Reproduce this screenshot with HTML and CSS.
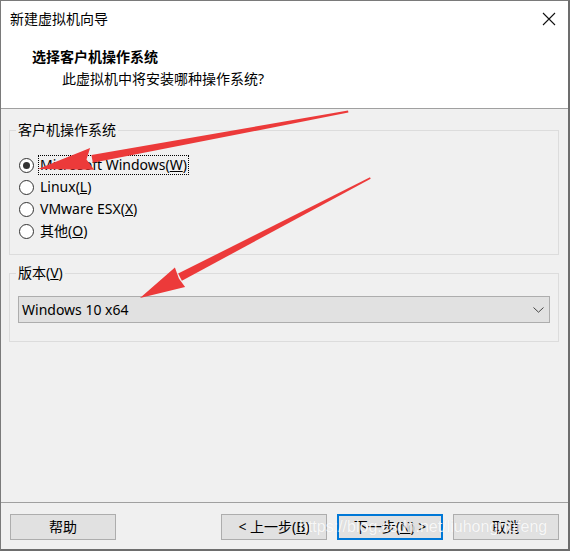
FILE: index.html
```html
<!DOCTYPE html>
<html lang="zh-CN">
<head>
<meta charset="utf-8">
<title>新建虚拟机向导</title>
<link rel="stylesheet" href="styles.css">
</head>
<body>
<div class="window">
  <div class="titlebar">
    <span class="title">新建虚拟机向导</span>
    <svg class="close" width="14" height="14" viewBox="0 0 14 14"><path d="M1 1 L13 13 M13 1 L1 13" stroke="#111" stroke-width="1.1" fill="none"/></svg>
  </div>
  <div class="header">
    <div class="h-title">选择客户机操作系统</div>
    <div class="h-sub">此虚拟机中将安装哪种操作系统?</div>
  </div>
  <div class="sep"></div>
  <div class="body">
    <fieldset class="group group-os">
      <legend>客户机操作系统</legend>
      <div class="radio-row"><span class="radio checked"></span><span class="rlabel focus">Microsoft Windows(<u>W</u>)</span></div>
      <div class="radio-row"><span class="radio"></span><span class="rlabel">Linux(<u>L</u>)</span></div>
      <div class="radio-row"><span class="radio"></span><span class="rlabel">VMware ESX(<u>X</u>)</span></div>
      <div class="radio-row"><span class="radio"></span><span class="rlabel">其他(<u>O</u>)</span></div>
    </fieldset>
    <fieldset class="group group-ver">
      <legend>版本(<u>V</u>)</legend>
      <div class="select">
        <span>Windows 10 x64</span>
        <svg class="chev" width="11" height="6" viewBox="0 0 11 6"><path d="M0.5 0.5 L5.5 5.2 L10.5 0.5" stroke="#444" stroke-width="1" fill="none"/></svg>
      </div>
    </fieldset>
  </div>
  <div class="sep"></div>
  <div class="footer">
    <button class="btn">帮助</button>
    <div class="spacer"></div>
    <button class="btn">&lt; 上一步(<u>B</u>)</button>
    <button class="btn primary">下一步(<u>N</u>) &gt;</button>
    <button class="btn">取消</button>
  </div>
  <div class="watermark">https://blog.csdn.net/liuhonghufeng</div>
  <svg class="arrows" width="570" height="551" viewBox="0 0 570 551">
    <polygon fill="#ec3a3a" points="348,110.5 348.4,112.6 92.8,162.8 91.4,155.0"/>
    <polygon fill="#ec3a3a" points="38,169 90.1,148.1 86.5,159.6 94.1,169.7"/>
    <polygon fill="#ec3a3a" points="370,177.3 370.7,178.7 181.9,280.8 178.1,273.6"/>
    <polygon fill="#ec3a3a" points="140,298 174.9,267.4 178.9,278.5 185.1,287.0"/>
  </svg>
</div>
</body>
</html>
```
FILE: styles.css
```css
* { box-sizing: border-box; }
html, body { margin: 0; padding: 0; background: #fff; }
body {
  font-family: "Noto Sans", "Noto Sans CJK SC", sans-serif;
  font-size: 14px;
  color: #000;
}
.window {
  position: relative;
  width: 570px;
  height: 551px;
  border-left: 1px solid #7a7a7a;
  border-top: 1px solid #7a7a7a;
  border-right: 2px solid #6d6d6d;
  border-bottom: 2px solid #6d6d6d;
  display: flex;
  flex-direction: column;
  background: #f0f0f0;
  overflow: hidden;
}
.titlebar {
  height: 35px;
  background: #fff;
  display: flex;
  align-items: center;
  justify-content: space-between;
  padding: 0 12px 0 9px;
}
.title { line-height: 20px; }
.header {
  height: 72px;
  background: #fff;
  padding: 11px 0 0 31px;
}
.h-title { font-weight: bold; line-height: 20px; }
.h-sub { line-height: 20px; margin-top: 2px; padding-left: 30px; }
.sep { height: 1px; background: #a0a0a0; }
.body {
  flex: 1;
  padding: 11px 0 0 8px;
}
.group {
  margin: 0;
  width: 550px;
  border: 1px solid #dcdcdc;
  min-width: 0;
}
.group legend {
  padding: 0 2px;
  margin-left: -2px;
  line-height: 20px;
}
.group-os { padding: 14px 9px 12px 8px; }
.group-ver { margin-top: 8px; padding: 13px 8px 18px 8px; }
.radio-row {
  height: 22px;
  display: flex;
  align-items: center;
}
.radio {
  width: 15px;
  height: 15px;
  border: 1px solid #333;
  border-radius: 50%;
  background: #fff;
  margin-left: 1px;
  margin-right: 5px;
  display: flex;
  align-items: center;
  justify-content: center;
}
.radio.checked::after {
  content: "";
  width: 7px;
  height: 7px;
  border-radius: 50%;
  background: #333;
}
.rlabel { line-height: 18px; padding: 0 1px; }
.rlabel.focus { outline: 1px dotted #000; outline-offset: 0; }
.select {
  height: 27px;
  width: 532px;
  background: #e1e1e1;
  border: 1px solid #adadad;
  display: flex;
  align-items: center;
  justify-content: space-between;
  padding: 0 5px 0 3px;
}
.footer {
  height: 46px;
  display: flex;
  align-items: flex-start;
  padding: 11px 9px 0 9px;
  gap: 10px;
}
.spacer { flex: 1; }
.btn {
  width: 106px;
  height: 26px;
  background: #e1e1e1;
  border: 1px solid #adadad;
  font-family: inherit;
  font-size: 14px;
  color: #000;
  padding: 0;
  line-height: 20px;
}
.btn.primary { border: 2px solid #0078d7; }
.watermark {
  position: absolute;
  left: 298px;
  top: 517px;
  font-family: "Liberation Sans", sans-serif;
  font-size: 16px;
  color: rgba(255, 255, 255, 0.85);
  text-shadow: 0 0 1px rgba(0, 0, 0, 0.08);
  pointer-events: none;
  white-space: nowrap;
}
.arrows {
  position: absolute;
  left: -1px;
  top: -1px;
  pointer-events: none;
}
```
